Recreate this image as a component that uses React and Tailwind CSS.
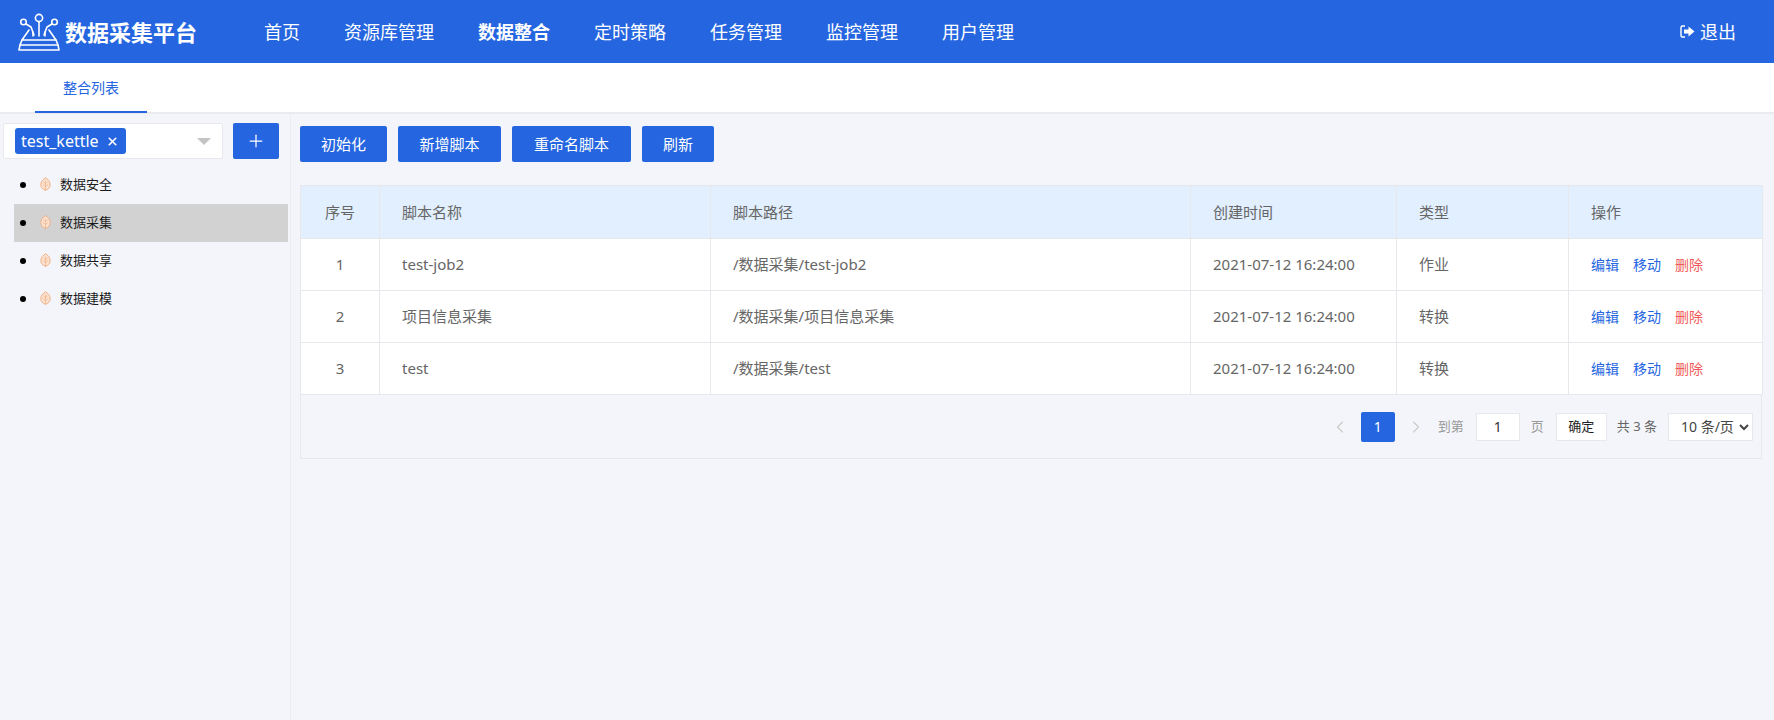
import React from 'react';
import { ChevronLeft, ChevronRight, Plus, X } from 'lucide-react';

const FONT = "font-['Noto_Sans','Noto_Sans_CJK_SC',sans-serif]";

const navItems = ['首页', '资源库管理', '数据整合', '定时策略', '任务管理', '监控管理', '用户管理'];
const treeItems = ['数据安全', '数据采集', '数据共享', '数据建模'];
const actions = [
  { label: '初始化', cls: 'w-[87px]' },
  { label: '新增脚本', cls: 'w-[103px]' },
  { label: '重命名脚本', cls: 'w-[119px]' },
  { label: '刷新', cls: 'w-[72px]' },
];
const rows = [
  { id: 1, name: 'test-job2', path: '/数据采集/test-job2', time: '2021-07-12 16:24:00', type: '作业' },
  { id: 2, name: '项目信息采集', path: '/数据采集/项目信息采集', time: '2021-07-12 16:24:00', type: '转换' },
  { id: 3, name: 'test', path: '/数据采集/test', time: '2021-07-12 16:24:00', type: '转换' },
];

const Logo = () => (
  <svg width="42" height="40" viewBox="0 0 42 40" fill="none" stroke="white" strokeWidth="1.6" strokeLinejoin="round" strokeLinecap="round">
    <circle cx="21" cy="6" r="3.6" />
    <circle cx="5.5" cy="10" r="2.8" />
    <circle cx="36.5" cy="10" r="2.8" />
    <path d="M21 10v14M8 12l5 3 3 8M34 12l-5 3-3 8" />
    <path d="M11 18l-7 10h34l-7-10" />
    <path d="M15 20v4M27 20v4" />
    <path d="M4 28l-2 5h38l-2-5" />
    <path d="M2 33l-1 5h40l-1-5" />
  </svg>
);

const LogoutIcon = () => (
  <svg width="15" height="13" viewBox="0 0 15 13" fill="white">
    <path d="M5 1H2.5A1.5 1.5 0 0 0 1 2.500v8A1.500 1.500 0 0 0 2.500 12H5" fill="none" stroke="white" strokeWidth="1.400" />
    <path d="M4 4.500h4.500V1.500L14.500 6.500 8.500 11.500V8.500H4z" />
  </svg>
);

const Leaf = () => (
  <svg width="11" height="14" viewBox="0 0 11 14" fill="#fbe3d3" stroke="#f0a878" strokeWidth="0.9" strokeLinejoin="round">
    <path d="M5.500 0.700C8 2.300 10.200 4.700 10.200 7.600 10.200 10.600 8 12.600 5.500 13.300 3 12.600 0.800 10.600 0.800 7.600 0.800 4.700 3 2.300 5.500 0.700z" />
    <path d="M5.500 3.500V13M5.500 6.500L3.300 4.800M5.500 6.500L7.700 4.800M5.500 9.500L2.800 7.500M5.500 9.500L8.200 7.500" fill="none" strokeWidth="0.600" />
  </svg>
);

function Header() {
  return (
    <header className="flex h-[63px] items-center bg-[#2566e0] text-white">
      <div className="flex w-[264px] items-center pl-[18px]">
        <Logo />
        <span className="ml-[5px] text-[22px] font-bold leading-none">数据采集平台</span>
      </div>
      <nav className="flex gap-[44px]">
        {navItems.map(n => (
          <span key={n} className={`text-[18px] leading-none ${n === '数据整合' ? 'font-bold' : ''}`}>{n}</span>
        ))}
      </nav>
      <div className="ml-auto flex items-center gap-[5px] pr-[38px] text-[18px] leading-none">
        <LogoutIcon />
        <span>退出</span>
      </div>
    </header>
  );
}

function Sidebar() {
  return (
    <aside className="w-[291px] shrink-0 border-r border-[#ebecf0] pl-[3px] pt-[9px]">
      <div className="flex gap-[10px]">
        <div className="flex h-[36px] w-[220px] items-center rounded-[2px] border border-[#e8e8ec] bg-white pl-[11px] pr-[11px]">
          <span className="flex h-[26px] w-[111px] items-center justify-between rounded-[3px] bg-[#2566e0] pl-[6px] pr-[7px] text-[16px] leading-none text-white">
            test_kettle
            <X size={13} strokeWidth={3} />
          </span>
          <span className="ml-auto h-0 w-0 border-x-[7px] border-t-[7px] border-x-transparent border-t-[#c4c4c4]" />
        </div>
        <button className="flex h-[36px] w-[46px] items-center justify-center rounded-[2px] bg-[#2566e0] text-white">
          <Plus size={20} strokeWidth={1.500} />
        </button>
      </div>
      <ul className="mt-[7px] pl-[11px]">
        {treeItems.map(t => (
          <li key={t} className={`flex h-[38px] w-[274px] items-center pl-[6px] text-[13px] text-[#1b1b1b] ${t === '数据采集' ? 'bg-[#d2d2d2]' : ''}`}>
            <span className="h-[6px] w-[6px] rounded-full bg-black" />
            <span className="ml-[14px] flex -translate-y-[1px]"><Leaf /></span>
            <span className="ml-[9px]">{t}</span>
          </li>
        ))}
      </ul>
    </aside>
  );
}

function ScriptTable() {
  const th = 'border border-[#e6e8ec] px-[22px] text-left font-normal';
  const td = 'border border-[#e6e8ec] px-[22px]';
  return (
    <table className="w-[1462px] table-fixed border-collapse text-[15px] text-[#666]">
      <colgroup>
        <col className="w-[79px]" />
        <col className="w-[331px]" />
        <col className="w-[480px]" />
        <col className="w-[206px]" />
        <col className="w-[172px]" />
        <col className="w-[194px]" />
      </colgroup>
      <thead>
        <tr className="h-[53px] bg-[#e1efff]">
          <th className={`${th} !px-0 !text-center`}>序号</th>
          <th className={th}>脚本名称</th>
          <th className={th}>脚本路径</th>
          <th className={th}>创建时间</th>
          <th className={th}>类型</th>
          <th className={th}>操作</th>
        </tr>
      </thead>
      <tbody className="bg-white">
        {rows.map(r => (
          <tr key={r.id} className="h-[52px]">
            <td className={`${td} !px-0 text-center`}>{r.id}</td>
            <td className={td}>{r.name}</td>
            <td className={td}>{r.path}</td>
            <td className={td}>{r.time}</td>
            <td className={td}>{r.type}</td>
            <td className={td}>
              <span className="flex gap-[14px] text-[14px]">
                <span className="text-[#2566e0]">编辑</span>
                <span className="text-[#2566e0]">移动</span>
                <span className="text-[#f25a5a]">删除</span>
              </span>
            </td>
          </tr>
        ))}
      </tbody>
    </table>
  );
}

function Pagination() {
  return (
    <div className="flex h-[64px] w-[1462px] items-center justify-end border border-t-0 border-[#e6e8ec] pr-[8px] text-[13px] text-[#999]">
      <ChevronLeft size={20} strokeWidth={1.500} className="text-[#ccc]" />
      <span className="ml-[11px] flex h-[30px] w-[34px] items-center justify-center rounded-[2px] bg-[#2566e0] text-[14px] text-white">1</span>
      <ChevronRight size={20} strokeWidth={1.500} className="ml-[11px] text-[#ccc]" />
      <span className="ml-[12px]">到第</span>
      <span className="ml-[12px] flex h-[28px] w-[44px] items-center justify-center border border-[#e8e8ec] bg-white text-[14px] text-[#333]">1</span>
      <span className="ml-[11px]">页</span>
      <button className="ml-[12px] h-[28px] w-[51px] border border-[#e8e8ec] bg-white text-[13px] text-[#222]">确定</button>
      <span className="ml-[10px] text-[#666]">共 3 条</span>
      <select defaultValue="10" className="ml-[11px] h-[28px] w-[85px] border border-[#e8e8ec] bg-white pl-[8px] text-[14px] text-[#444]">
        <option value="10">10 条/页</option>
        <option value="20">20 条/页</option>
      </select>
    </div>
  );
}

export default function App() {
  return (
    <div className={`flex h-[720px] flex-col bg-[#f4f5fa] ${FONT}`}>
      <Header />
      <div className="h-[51px] border-b-2 border-[#ebebef] bg-white pl-[35px]">
        <div className="flex h-[50px] w-[112px] items-center justify-center border-b-[2px] border-[#2566e0] text-[14px] text-[#2566e0]">整合列表</div>
      </div>
      <div className="flex flex-1">
        <Sidebar />
        <main className="pl-[9px] pt-[12px]">
          <div className="flex gap-[11px]">
            {actions.map(a => (
              <button key={a.label} className={`h-[36px] rounded-[2px] bg-[#2566e0] text-[15px] text-white ${a.cls}`}>{a.label}</button>
            ))}
          </div>
          <div className="mt-[23px]">
            <ScriptTable />
            <Pagination />
          </div>
        </main>
      </div>
    </div>
  );
}
